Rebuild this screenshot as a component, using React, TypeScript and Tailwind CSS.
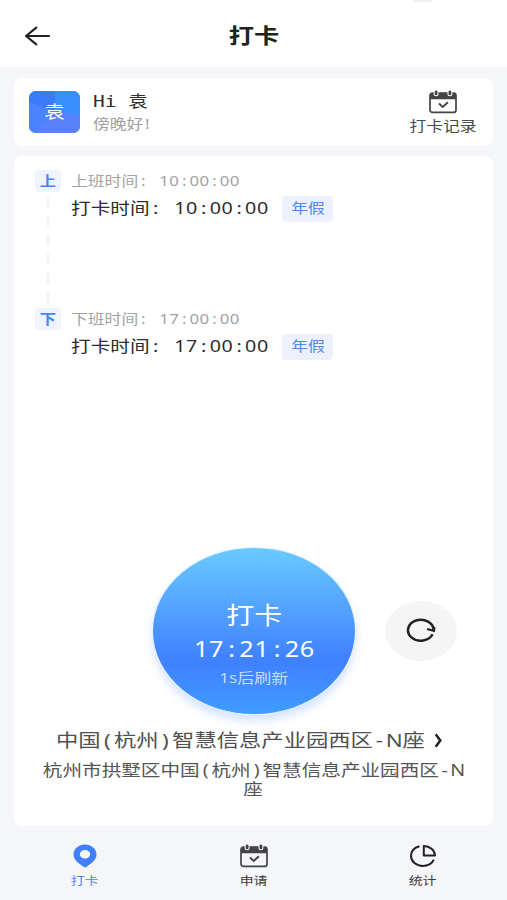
import React from "react";

const PAD: Record<string, string> = {
  ":": "px-[0.166em]",
  "(": "px-[0.15em]",
  ")": "px-[0.15em]",
  "-": "px-[0.125em]",
  "!": "px-[0.1em]",
};

type TextProps = { children: string; className?: string; center?: boolean };

function Wide({ children, className = "", center = false }: TextProps) {
  return (
    <span
      className={`block whitespace-nowrap scale-x-[1.2] tracking-[0.028em] [word-spacing:0.36em] ${
        center ? "origin-center" : "origin-left"
      } ${className}`}
    >
      {children.split(/([:()!-])/).map((part, i) =>
        PAD[part] ? (
          <span key={i} className={`tracking-normal ${PAD[part]}`}>
            {part}
          </span>
        ) : /[0-9A-Za-z ]/.test(part) && part.length > 1 && !/[\u4e00-\u9fff]/.test(part) ? (
          part
        ) : (
          <span key={i} className="tracking-normal">
            {part}
          </span>
        )
      )}
    </span>
  );
}

function CalendarIcon({ className = "", halo = "#fff" }: { className?: string; halo?: string }) {
  return (
    <svg viewBox="0 0 28 24" className={className} fill="none">
      <rect x="1" y="3" width="26" height="19.4" rx="2.5" stroke="#444447" strokeWidth="1.7" />
      <path d="M1 9.2V5a2.2 2.2 0 0 1 2.2-2.2h21.6A2.2 2.2 0 0 1 27 5v4.2Z" fill="#444447" />
      <rect x="4.6" y="-0.5" width="5" height="6.8" rx="2.5" fill={halo} />
      <rect x="18.4" y="-0.5" width="5" height="6.8" rx="2.5" fill={halo} />
      <rect x="5.7" y="0.6" width="2.8" height="4.7" rx="1.4" fill="#444447" />
      <rect x="19.5" y="0.6" width="2.8" height="4.7" rx="1.4" fill="#444447" />
      <path d="m10 13.6 3.7 3.3 5.2-4.6" stroke="#444447" strokeWidth="2" />
    </svg>
  );
}

type ShiftProps = { mark: string; label: string; time: string; line?: boolean };

function Shift({ mark, label, time, line }: ShiftProps) {
  return (
    <div className="flex h-[138px]">
      <div className="flex w-[26px] flex-col items-center">
        <div className="flex h-[22px] w-[26px] items-center justify-center rounded-[4px] bg-[#eef3fe]">
          <Wide center className="text-[13.5px] font-bold leading-[22px] text-[#4682f5]">
            {mark}
          </Wide>
        </div>
        {line && (
          <svg className="mt-[5px] h-[106px] w-[4px]" viewBox="0 0 4 106">
            <path d="M2 0V106" stroke="#f3f4f6" strokeWidth="3" strokeDasharray="11 8" />
          </svg>
        )}
      </div>
      <div className="ml-[10px]">
        <Wide className="text-[14px] leading-[22px] text-[#a3a3a3]">{`${label}: ${time}`}</Wide>
        <div className="mt-[4px] flex h-[26px] items-center">
          <div className="w-[211px]">
            <Wide className="-mt-[2px] text-[16.4px] leading-[26px] text-[#2c2c2e]">{`打卡时间: ${time}`}</Wide>
          </div>
          <div className="flex h-[26px] w-[51px] items-center justify-center rounded-[4px] bg-[#edf1fe]">
            <Wide center className="-mt-[2px] text-[14px] leading-[26px] text-[#5289f0]">
              年假
            </Wide>
          </div>
        </div>
      </div>
    </div>
  );
}

export default function App() {
  return (
    <div className="flex h-[900px] w-[507px] flex-col overflow-hidden bg-[#f5f6fa] font-['Noto_Sans','Noto_Sans_CJK_SC',sans-serif]">
      <header className="relative flex h-[67px] items-center bg-white pt-[4px]">
        <div className="absolute left-[413px] top-0 h-[2px] w-[19px] rounded-b-full bg-[#efefef]" />
        <svg className="ml-[24px] h-[20px] w-[27px]" viewBox="0 0 27 20" fill="none">
          <path
            d="M2 10H25M12.3 1.6 2 10l10.3 8.4"
            stroke="#222"
            strokeWidth="2.2"
            strokeLinecap="round"
            strokeLinejoin="round"
          />
        </svg>
        <div className="flex flex-1 justify-center pb-[2px] pr-[50px]">
          <Wide center className="text-[21px] font-bold leading-[30px] text-[#222]">
            打卡
          </Wide>
        </div>
      </header>

      <section className="mx-[14px] mt-[11px] flex h-[68px] items-center rounded-[8px] bg-white px-[15px]">
        <div className="relative flex h-[42px] w-[51px] items-center justify-center overflow-hidden rounded-[7px] bg-[#4b80fb]">
          <svg className="absolute inset-0 h-full w-full" viewBox="0 0 51 42" preserveAspectRatio="none">
            <path d="M0 0H26V20L0 11Z" fill="#3c7bf8" />
            <path d="M26 0H51V24L26 20Z" fill="#3a8ffe" />
            <path d="M0 11 26 20 5 42H0Z" fill="#4a83fb" />
            <path d="M26 20 51 24V42H5Z" fill="#5881fa" />
          </svg>
          <Wide center className="relative -mt-[1px] text-[17px] leading-[24px] text-white">
            袁
          </Wide>
        </div>
        <div className="ml-[13px] flex-1">
          <div className="origin-left scale-x-[1.2] whitespace-pre font-['DejaVu_Sans_Mono','Noto_Sans_CJK_SC',monospace] text-[16.3px] leading-[23px] text-[#2f2f2f]">
            Hi 袁
          </div>
          <Wide className="text-[14px] leading-[22px] text-[#a0a0a0]">傍晚好!</Wide>
        </div>
        <div className="flex w-[70px] flex-col items-center pt-[3px]">
          <CalendarIcon className="h-[24px] w-[28px]" />
          <Wide center className="mt-[1px] text-[14px] leading-[22px] text-[#4a4a4a]">
            打卡记录
          </Wide>
        </div>
      </section>

      <main className="mx-[14px] mt-[10px] flex h-[670px] flex-col rounded-[8px] bg-white pt-[14px]">
        <div className="pl-[21px]">
          <Shift mark="上" label="上班时间" time="10:00:00" line />
          <Shift mark="下" label="下班时间" time="17:00:00" />
        </div>

        <div className="mt-[101px] flex items-center pl-[138px]">
          <button className="flex h-[168px] w-[204px] flex-col items-center rounded-[50%] border border-[#e3f1ff] bg-[linear-gradient(180deg,#6acaff_0%,#3f80ff_68%,#3f9cff_100%)] pt-[50px] shadow-[0_6px_9px_rgba(64,130,255,0.22)]">
            <Wide center className="text-[23.3px] leading-[34px] text-white">
              打卡
            </Wide>
            <Wide center className="text-[21px] leading-[34px] text-white">
              17:21:26
            </Wide>
            <Wide center className="text-[14.2px] leading-[24px] text-[#c4dcff]">
              1s后刷新
            </Wide>
          </button>
          <button className="ml-[29px] flex h-[60px] w-[72px] items-center justify-center rounded-[50%] bg-[#f5f5f5]">
            <svg className="h-[26px] w-[30px]" viewBox="0 0 30 26" fill="none">
              <path d="M26.600 16.300A12.800 10.500 0 1 1 27.600 12.400" stroke="#222" strokeWidth="2.500" />
              <path d="M21 11 28 12.900 28.300 9" stroke="#222" strokeWidth="2.200" />
            </svg>
          </button>
        </div>

        <div className="mt-[10px] flex h-[30px] items-center pl-[42px]">
          <div className="w-[378px]">
            <Wide className="text-[18.6px] leading-[30px] text-[#505050]">
              中国(杭州)智慧信息产业园西区-N座
            </Wide>
          </div>
          <svg className="h-[15px] w-[9px]" viewBox="0 0 9 15" fill="none">
            <path d="m1.7 1.2 4.6 6.3-4.6 6.3" stroke="#222" strokeWidth="2.5" />
          </svg>
        </div>
        <div className="flex flex-col items-center pt-[6px] text-[#565656]">
          <Wide center className="text-[16.35px] leading-[19px]">
            杭州市拱墅区中国(杭州)智慧信息产业园西区-N
          </Wide>
          <Wide center className="text-[16.35px] leading-[19px]">
            座
          </Wide>
        </div>
      </main>

      <nav className="grid flex-1 grid-cols-3 pt-[18px] text-[11.6px] leading-[18px]">
        <div className="flex flex-col items-center text-[#5588e8]">
          <svg className="h-[24px] w-[24px]" viewBox="0 0 24 24">
            <path
              fillRule="evenodd"
              d="M12 .5C5.6.5.5 4.9.5 10.4c0 3.3 1.9 6.2 4.6 8.4l5.6 4.3c.8.6 1.8.6 2.6 0l5.6-4.3c2.7-2.2 4.6-5.1 4.6-8.4C23.5 4.9 18.4.5 12 .5ZM12 5.9A5.2 4.3 0 1 1 12 14.5 5.2 4.3 0 1 1 12 5.9Z"
              fill="#407fff"
            />
          </svg>
          <Wide center className="mt-[4px]">打卡</Wide>
        </div>
        <div className="flex flex-col items-center text-[#3c3c3e]">
          <CalendarIcon className="h-[24px] w-[28px]" halo="#f5f6fa" />
          <Wide center className="mt-[4px]">申请</Wide>
        </div>
        <div className="flex flex-col items-center text-[#3c3c3e]">
          <svg className="h-[24px] w-[28px]" viewBox="0 0 28 24" fill="none" stroke="#222" strokeWidth="2">
            <path d="M10.5 2.2C5.500 3.500 2 7.200 2 11.900 2 17.500 7.200 21.900 13.800 21.900c5 0 9.200-2.500 11-6.200" />
            <path d="M14.800 2V11.400H26C25.600 6.300 21 2.200 14.800 2Z" strokeLinejoin="round" />
          </svg>
          <Wide center className="mt-[4px]">统计</Wide>
        </div>
      </nav>
    </div>
  );
}
